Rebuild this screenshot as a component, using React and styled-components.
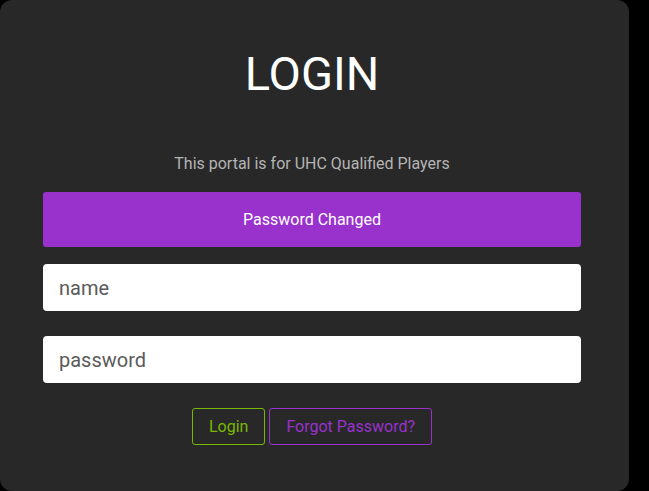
import React from "react";
import styled, { createGlobalStyle } from "styled-components";

const Global = createGlobalStyle`
  html, body { margin: 0; padding: 0; background: #000; }
  body { font-family: Roboto, "Liberation Sans", sans-serif; overflow: hidden; }
  * { box-sizing: border-box; }
`;

const Page = styled.div`
  width: 649px;
  height: 491px;
  background: #000;
  overflow: hidden;
  display: flex;
  align-items: flex-start;
`;

const Card = styled.div`
  width: 629px;
  height: 491px;
  background: #282828;
  border-radius: 12px;
  padding: 46px 48px 0 43px;
  display: flex;
  flex-direction: column;
  align-items: stretch;
`;

const Title = styled.h1`
  margin: 0;
  font-weight: 400;
  font-size: 47px;
  line-height: 56px;
  color: #fff;
  text-align: center;
`;

const Subtitle = styled.p`
  margin: 52px 0 0;
  font-size: 16px;
  line-height: 20px;
  color: #b4b4b4;
  text-align: center;
`;

const Alert = styled.div`
  margin-top: 18px;
  height: 55px;
  background: #9932cc;
  border-radius: 3px;
  color: #fff;
  font-size: 16px;
  display: flex;
  align-items: center;
  justify-content: center;
`;

const Input = styled.input`
  margin-top: ${(p) => p.$gap}px;
  height: 47px;
  border: none;
  border-radius: 4px;
  background: #fff;
  padding: 0 16px;
  font-family: Roboto, "Liberation Sans", sans-serif;
  font-size: 20px;
  color: #333;
  outline: none;
  &::placeholder { color: #5a5a5a; }
`;

const Actions = styled.div`
  margin-top: 25px;
  display: flex;
  justify-content: center;
  gap: 4px;
`;

const Button = styled.button`
  height: 37px;
  padding: 0 16px;
  background: transparent;
  border: 1px solid ${(p) => p.$color};
  border-radius: 3px;
  color: ${(p) => p.$color};
  font-family: Roboto, "Liberation Sans", sans-serif;
  font-size: 16px;
  cursor: pointer;
`;

export default function App() {
  return (
    <>
      <Global />
      <Page>
        <Card>
          <Title>LOGIN</Title>
          <Subtitle>This portal is for UHC Qualified Players</Subtitle>
          <Alert>Password Changed</Alert>
          <Input $gap={17} placeholder="name" />
          <Input $gap={25} type="password" placeholder="password" />
          <Actions>
            <Button $color="#7ab800">Login</Button>
            <Button $color="#9932cc">Forgot Password?</Button>
          </Actions>
        </Card>
      </Page>
    </>
  );
}
